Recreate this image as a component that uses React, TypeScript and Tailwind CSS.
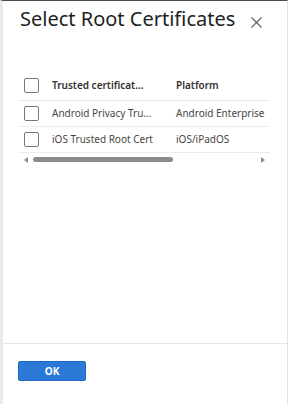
import React from 'react';

const rows = [
  { name: 'Android Privacy Tru...', platform: 'Android Enterprise' },
  { name: 'iOS Trusted Root Cert', platform: 'iOS/iPadOS' },
];

const Checkbox: React.FC = () => (
  <span className="block w-[15px] h-[15px] rounded-[2px] border border-[#7a7876] bg-white" />
);

export default function App() {
  return (
    <div
      className="w-[288px] h-[404px] flex flex-col bg-white border-t border-t-[#4a4a4a] border-l-[3px] border-l-[#ebebeb] border-r border-r-[#e3e3e3] text-[#323130] overflow-hidden"
      style={{ fontFamily: '"Segoe UI", "Noto Sans", "Open Sans", sans-serif' }}
    >
      {/* header */}
      <div className="flex items-start justify-between pl-[17px] pr-[25px] pt-[4px]">
        <h2 className="text-[20px] leading-[28px] font-normal text-[#201f1e]">Select Root Certificates</h2>
        <button className="mt-[12px] text-[#605e5c]" aria-label="Close">
          <svg width="11" height="11" viewBox="0 0 11 11" fill="none" stroke="currentColor" strokeWidth="1.1">
            <path d="M0.5 0.5 L10.5 10.5 M10.5 0.5 L0.5 10.5" />
          </svg>
        </button>
      </div>

      {/* table */}
      <div className="ml-[16px] w-[251px] mt-[38px] text-[10px]">
        <div className="flex items-center h-[30px] border-b border-[#ececec]">
          <div className="w-[33px] shrink-0 pl-[5px]">
            <Checkbox />
          </div>
          <div className="w-[124px] shrink-0 font-semibold text-[#323130] whitespace-nowrap overflow-hidden">Trusted certificat...</div>
          <div className="flex-1 font-semibold text-[#323130] whitespace-nowrap">Platform</div>
        </div>
        {rows.map((r) => (
          <div key={r.name} className="flex items-center h-[26px] border-b border-[#ececec]">
            <div className="w-[33px] shrink-0 pl-[5px]">
              <Checkbox />
            </div>
            <div className="w-[124px] shrink-0 text-[#484644] whitespace-nowrap overflow-hidden">{r.name}</div>
            <div className="flex-1 text-[#484644] whitespace-nowrap">{r.platform}</div>
          </div>
        ))}
        {/* horizontal scrollbar */}
        <div className="flex items-center h-[13px] pl-[5px] pr-[5px]">
          <svg width="4" height="6" viewBox="0 0 4 6" className="text-[#8a8a8a]">
            <path d="M4 0 L0 3 L4 6 Z" fill="currentColor" />
          </svg>
          <div className="flex-1 mx-[5px]">
            <div className="h-[5px] w-[140px] rounded-full bg-[#8c8c8c]" />
          </div>
          <svg width="4" height="6" viewBox="0 0 4 6" className="text-[#8a8a8a]">
            <path d="M0 0 L4 3 L0 6 Z" fill="currentColor" />
          </svg>
        </div>
      </div>

      <div className="flex-1" />

      {/* footer */}
      <div className="border-t border-[#e6e6e6] pl-[15px] pt-[17px] pb-[23px]">
        <button className="w-[68px] h-[20px] rounded-[2px] bg-[#2b79d7] border border-[#2169c0] text-white text-[10px] font-bold flex items-center justify-center">
          OK
        </button>
      </div>
    </div>
  );
}
